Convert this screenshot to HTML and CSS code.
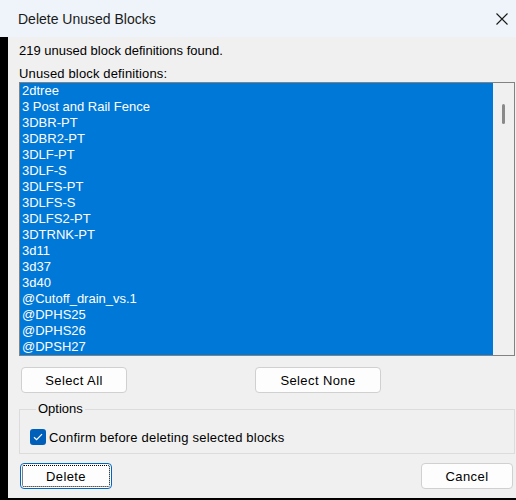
FILE: index.html
```html
<!DOCTYPE html>
<html lang="en">
<head>
  <meta charset="UTF-8">
  <title>Delete Unused Blocks</title>
  <link rel="stylesheet" href="styles.css">
</head>
<body>
  <div class="titlebar">
    <span class="title">Delete Unused Blocks</span>
    <svg class="close" width="12" height="12" viewBox="0 0 12 12">
      <path d="M0.5 0.5 L11.5 11.5 M11.5 0.5 L0.5 11.5" stroke="#1a1a1a" stroke-width="1.1" fill="none"/>
    </svg>
  </div>

  <div class="frame">
    <div class="content">
      <p class="count">219 unused block definitions found.</p>
      <p class="label">Unused block definitions:</p>

      <div class="listbox">
        <ul class="items">
          <li>2dtree</li>
          <li>3 Post and Rail Fence</li>
          <li>3DBR-PT</li>
          <li>3DBR2-PT</li>
          <li>3DLF-PT</li>
          <li>3DLF-S</li>
          <li>3DLFS-PT</li>
          <li>3DLFS-S</li>
          <li>3DLFS2-PT</li>
          <li>3DTRNK-PT</li>
          <li>3d11</li>
          <li>3d37</li>
          <li>3d40</li>
          <li>@Cutoff_drain_vs.1</li>
          <li>@DPHS25</li>
          <li>@DPHS26</li>
          <li>@DPSH27</li>
        </ul>
        <div class="scroll"><div class="thumb"></div></div>
      </div>

      <div class="select-row">
        <button class="btn btn-all">Select All</button>
        <button class="btn btn-none">Select None</button>
      </div>

      <fieldset class="options">
        <legend>Options</legend>
        <label class="check">
          <span class="box">
            <svg width="10" height="8" viewBox="0 0 10 8">
              <path d="M1 4.2 L3.6 6.6 L9 1.2" stroke="#fff" stroke-width="1.2" fill="none"/>
            </svg>
          </span>
          Confirm before deleting selected blocks
        </label>
      </fieldset>

      <div class="actions">
        <button class="btn btn-delete">Delete</button>
        <button class="btn btn-cancel">Cancel</button>
      </div>
    </div>
  </div>
</body>
</html>
```

FILE: styles.css
```css
body {
  margin: 0;
  width: 516px;
  height: 500px;
  overflow: hidden;
  font-family: "Liberation Sans", Arial, sans-serif;
  font-size: 13px;
  color: #000;
  background: #000;
}

.titlebar {
  height: 37px;
  background: #eef4f9;
  display: flex;
  align-items: center;
  justify-content: space-between;
  padding: 0 8px 0 18px;
}

.title {
  font-size: 14px;
  color: #1a1a1a;
}

.close {
  margin-top: 1px;
}

.frame {
  display: flex;
  padding-left: 8px;
  padding-bottom: 2px;
  background: #000;
}

.content {
  flex: 1;
  height: 461px;
  background: #f0f0f0;
  padding-left: 11px;
}

p {
  margin: 0;
  line-height: 16px;
}

.count {
  padding-top: 6px;
}

.label {
  margin-top: 7px;
  letter-spacing: 0.15px;
}

.listbox {
  display: flex;
  height: 272px;
  margin-right: 1px;
  border: 1px solid #828282;
}

.items {
  flex: 1;
  margin: 0;
  padding: 0;
  list-style: none;
  background: #0078d7;
  color: #fff;
  font-size: 13px;
  overflow: hidden;
}

.items li {
  height: 16px;
  line-height: 16px;
  padding-left: 2px;
  white-space: nowrap;
}

.scroll {
  width: 21px;
  background: #f0f0f0;
  padding: 21px 0 0 9px;
  box-sizing: border-box;
}

.thumb {
  width: 3px;
  height: 20px;
  border-radius: 2px;
  background: #8a8a8a;
}

.select-row {
  display: flex;
  margin-top: 11px;
  padding-left: 2px;
}

.btn {
  height: 26px;
  background: #fdfdfd;
  border: 1px solid #d0d0d0;
  border-radius: 4px;
  font-family: inherit;
  font-size: 13px;
  letter-spacing: 0.4px;
  color: #000;
  padding: 0;
}

.btn-all {
  width: 106px;
}

.btn-none {
  width: 126px;
  margin-left: 128px;
}

.options {
  margin: 8px 1px 0 0;
  padding: 12px 10px 8px;
  border: 1px solid #dcdcdc;
  min-width: 0;
}

.options legend {
  padding: 0 2px;
  margin-left: 6px;
  line-height: 16px;
}

.check {
  display: flex;
  align-items: center;
  gap: 3px;
  height: 16px;
  letter-spacing: 0.2px;
}

.box {
  width: 16px;
  height: 16px;
  border-radius: 3px;
  background: #005fb8;
  display: flex;
  align-items: center;
  justify-content: center;
}

.actions {
  display: flex;
  justify-content: space-between;
  margin-top: 9px;
  padding: 0 3px 0 1px;
}

.btn-delete {
  width: 92px;
  border-color: #0067c0;
  outline: 1px dotted #000;
  outline-offset: -3px;
}

.btn-cancel {
  width: 92px;
}
```
